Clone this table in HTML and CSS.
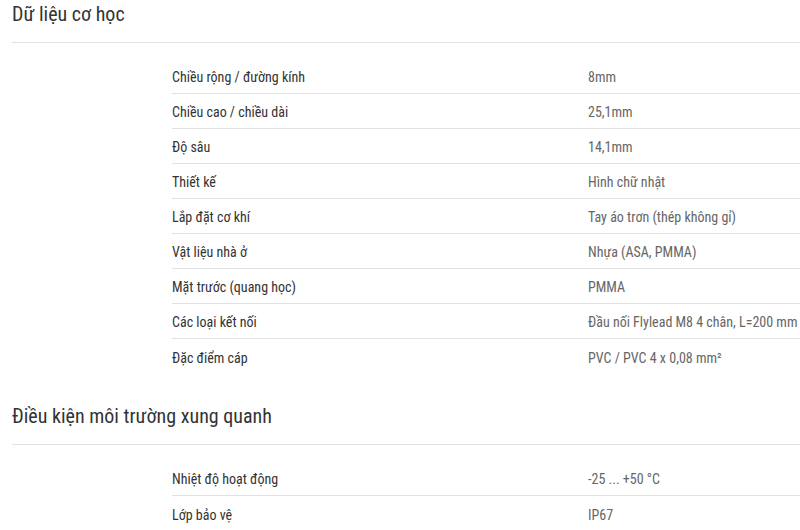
FILE: index.html
```html
<!DOCTYPE html>
<html lang="vi">
<head>
<meta charset="utf-8">
<link rel="stylesheet" href="styles.css">
</head>
<body>
<div class="page">
  <section class="section">
    <h2 class="section-title">Dữ liệu cơ học</h2>
    <div class="spec-table">
      <div class="spec-row"><div class="spec-label">Chiều rộng / đường kính</div><div class="spec-value">8mm</div></div>
      <div class="spec-row"><div class="spec-label">Chiều cao / chiều dài</div><div class="spec-value">25,1mm</div></div>
      <div class="spec-row"><div class="spec-label">Độ sâu</div><div class="spec-value">14,1mm</div></div>
      <div class="spec-row"><div class="spec-label">Thiết kế</div><div class="spec-value">Hình chữ nhật</div></div>
      <div class="spec-row"><div class="spec-label">Lắp đặt cơ khí</div><div class="spec-value">Tay áo trơn (thép không gỉ)</div></div>
      <div class="spec-row"><div class="spec-label">Vật liệu nhà ở</div><div class="spec-value">Nhựa (ASA, PMMA)</div></div>
      <div class="spec-row"><div class="spec-label">Mặt trước (quang học)</div><div class="spec-value">PMMA</div></div>
      <div class="spec-row"><div class="spec-label">Các loại kết nối</div><div class="spec-value">Đầu nối Flylead M8 4 chân, L=200 mm</div></div>
      <div class="spec-row"><div class="spec-label">Đặc điểm cáp</div><div class="spec-value">PVC / PVC 4 x 0,08 mm²</div></div>
    </div>
  </section>
  <section class="section">
    <h2 class="section-title">Điều kiện môi trường xung quanh</h2>
    <div class="spec-table">
      <div class="spec-row"><div class="spec-label">Nhiệt độ hoạt động</div><div class="spec-value">-25 ... +50 °C</div></div>
      <div class="spec-row"><div class="spec-label">Lớp bảo vệ</div><div class="spec-value">IP67</div></div>
    </div>
  </section>
</div>
</body>
</html>
```
FILE: styles.css
```css
html, body {
  margin: 0;
  padding: 0;
  background: #fff;
  overflow: hidden;
}
body {
  font-family: Roboto, "Noto Sans", Arial, sans-serif;
  font-stretch: condensed;
  color: #333;
}
.page {
  padding-left: 12px;
  width: 820px;
}
.section {
  margin-bottom: 28px;
}
.section-title {
  margin: 0;
  font-size: 20px;
  font-weight: 400;
  line-height: 29px;
  color: #333;
  height: 42px;
  border-bottom: 1px solid #e1e1e1;
}
.spec-table {
  margin-left: 160px;
  margin-top: 16px;
}
.spec-row {
  display: flex;
  align-items: center;
  box-sizing: border-box;
  height: 35px;
  padding-top: 2px;
  border-bottom: 1px solid #e1e1e1;
  font-size: 14px;
}
.spec-row:last-child {
  border-bottom: none;
}
.spec-label {
  width: 416px;
  flex: none;
  color: #333;
}
.spec-value {
  color: #666;
  white-space: nowrap;
}
```
